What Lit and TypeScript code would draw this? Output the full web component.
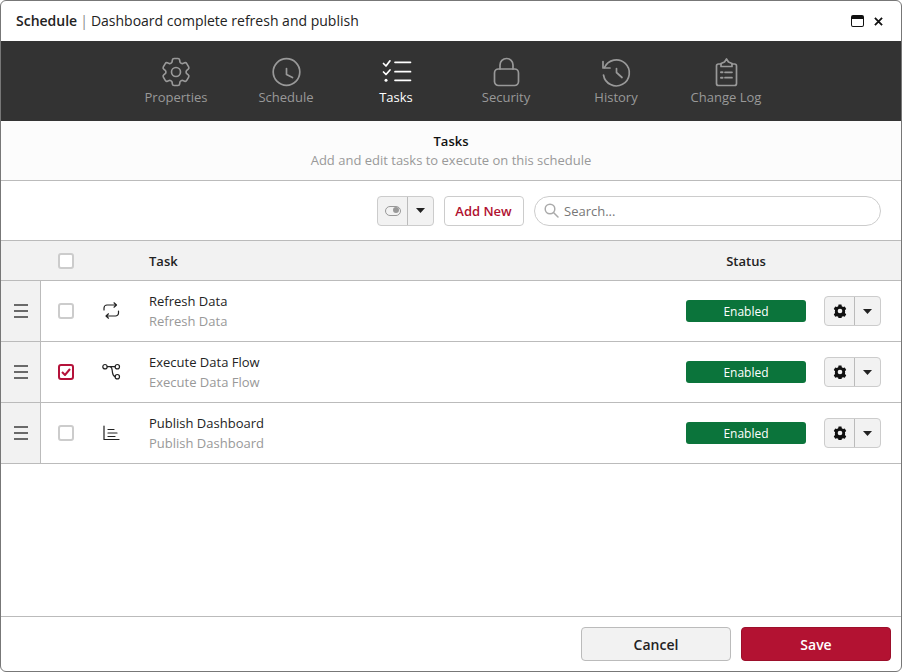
import { LitElement, html, css, svg } from "lit";
import { customElement } from "lit/decorators.js";

const tabs = [
  { label: "Properties", icon: svg`<g transform="translate(14 14) scale(1.500) translate(-12 -12)" stroke-width="1.100"><path d="M9.594 3.940c.090-.542.560-.940 1.110-.940h2.593c.550 0 1.020.398 1.110.940l.213 1.281c.063.374.313.686.645.870.074.040.147.083.220.127.325.196.720.257 1.075.124l1.217-.456a1.125 1.125 0 0 1 1.370.490l1.296 2.247a1.125 1.125 0 0 1-.260 1.431l-1.003.827c-.293.241-.438.613-.430.992a7.723 7.723 0 0 1 0 .255c-.008.378.137.750.430.991l1.004.827c.424.350.534.955.260 1.430l-1.298 2.247a1.125 1.125 0 0 1-1.369.491l-1.217-.456c-.355-.133-.750-.072-1.076.124a6.470 6.470 0 0 1-.220.128c-.331.183-.581.495-.644.869l-.213 1.281c-.090.543-.560.940-1.110.940h-2.594c-.550 0-1.019-.398-1.110-.940l-.213-1.281c-.062-.374-.312-.686-.644-.870a6.520 6.520 0 0 1-.220-.127c-.325-.196-.720-.257-1.076-.124l-1.217.456a1.125 1.125 0 0 1-1.369-.490l-1.297-2.247a1.125 1.125 0 0 1 .260-1.431l1.004-.827c.292-.240.437-.613.430-.991a6.932 6.932 0 0 1 0-.255c.007-.380-.138-.751-.430-.992l-1.004-.827a1.125 1.125 0 0 1-.260-1.430l1.297-2.247a1.125 1.125 0 0 1 1.370-.491l1.216.456c.356.133.751.072 1.076-.124.072-.044.146-.086.220-.128.332-.183.582-.495.644-.869l.214-1.280Z"/><circle cx="12" cy="12" r="3"/></g>` },
  { label: "Schedule", icon: svg`<circle cx="14.500" cy="14" r="13.300"/><path d="M14.500 10.500v6l6 3"/>` },
  { label: "Tasks", icon: svg`<path d="M1.500 5.500 4 8 8 2.800M1.500 14 4 16.500 8 12M13 4.300h15.500M13 13.700h15.500M13 22.300h15.500"/><circle cx="4" cy="22.300" r="1.500" fill="currentColor" stroke="none"/>` },
  { label: "Security", icon: svg`<rect x="2.500" y="11" width="24" height="16.500" rx="4"/><path d="M8 11V7a6.500 6.500 0 0 1 13 0v4"/>` },
  { label: "History", icon: svg`<path d="M2.500 9.500A13 13 0 1 1 1.500 17"/><path d="M1 3.500V10h7M14.500 10.500v4l5.500 5"/>` },
  { label: "Change Log", icon: svg`<path d="M9 6H6.500a2 2 0 0 0-2 2v17.500a2 2 0 0 0 2 2h16a2 2 0 0 0 2-2V8a2 2 0 0 0-2-2H20"/><path d="M9 8.500V5.500L12.500 4 14.500 1 16.500 4 20 5.500V8.500Z"/><path d="M13 14.300h7M13 19.700h7"/><path d="M9 14.300h1.500M9 19.700h1.500" stroke-width="2"/>` },
];

const rowIcons = [
  svg`<path d="M2 8V6a3 3 0 0 1 3-3h9.500M12 .8 14.500 3 12 5.200M16.500 9v2a3 3 0 0 1-3 3H4.500M6.500 11.800 4 14 6.500 16.200"/>`,
  svg`<circle cx="3" cy="3.700" r="2.200"/><circle cx="15.300" cy="3.700" r="2.200"/><circle cx="15.300" cy="13.700" r="2.200"/><path d="M5.200 3.700h7.900M8 3.700c2.500.5 2 3 2.500 6 .3 2 1.500 3.700 2.700 4"/>`,
  svg`<path d="M2 2V15.500H17M6 5.500h6M6 9h9M6 12.500h7"/>`,
];

const rows = [
  { title: "Refresh Data", checked: false },
  { title: "Execute Data Flow", checked: true },
  { title: "Publish Dashboard", checked: false },
];

const caret = html`<svg class="caret" viewBox="0 0 9 5"><path d="M0 0h9L4.500 5z" fill="currentColor"/></svg>`;
const gear = html`<svg class="gear" viewBox="0 0 24 24"><path fill-rule="evenodd" fill="currentColor" d="M9.500 1h5l.6 3 2.200 1.200 2.900-1 2.500 4.300-2.300 2a8 8 0 0 1 0 5l2.300 2-2.500 4.300-2.900-1-2.200 1.200-.6 3h-5l-.6-3-2.200-1.200-2.900 1-2.500-4.300 2.300-2a8 8 0 0 1 0-5l-2.300-2 2.500-4.300 2.900 1L8.900 4zM12 8a4 4 0 1 0 0 8 4 4 0 0 0 0-8z"/></svg>`;

@customElement("app-root")
export class AppRoot extends LitElement {
  static styles = css`
    :host { display: block; width: 902px; height: 672px; font-family: "Open Sans", sans-serif; font-size: 13px; color: #222; background: #fff; }
    * { box-sizing: border-box; }
    .win { width: 902px; height: 672px; border: 1px solid #777; border-radius: 6px; overflow: hidden; display: flex; flex-direction: column; background: #fff; }
    .title { height: 40px; flex: none; display: flex; align-items: center; padding: 0 18px 2px 15px; font-size: 14px; color: #222; }
    .title b { font-weight: 600; }
    .title .sep { color: #888; margin: 0 3px; font-weight: 400; }
    .title .grow { flex: 1; }
    .ctl { display: flex; align-items: center; gap: 10px; margin-top: 2px; }
    .maxi { width: 13px; height: 12px; border: 1.500px solid #111; border-top-width: 4px; border-radius: 2px; }
    .close { width: 9px; height: 9px; display: block; }
    .tabs { height: 80px; flex: none; background: #333; display: flex; justify-content: center; }
    .tab { width: 110px; display: flex; flex-direction: column; align-items: center; padding-top: 17px; color: #999; }
    .tab.on { color: #fff; }
    .tab svg { width: 28px; height: 28px; display: block; fill: none; stroke: currentColor; stroke-width: 1.700; stroke-linecap: round; stroke-linejoin: round; overflow: visible; }
    .tab span { margin-top: 2px; line-height: 18px; font-size: 13px; }
    .head { height: 60px; flex: none; background: #fcfcfc; border-bottom: 1px solid #bbb; display: flex; flex-direction: column; align-items: center; padding-top: 11px; line-height: 19px; }
    .head div { color: #111; font-weight: 600; }
    .head small { font-size: 13px; color: #999; }
    .tools { height: 59px; flex: none; display: flex; align-items: center; justify-content: flex-end; padding: 0 20px 0 0; }
    .split { display: flex; width: 57px; height: 30px; border: 1px solid #ccc; border-radius: 4px; background: #f2f2f2; overflow: hidden; }
    .split > div { display: flex; align-items: center; justify-content: center; }
    .split > div + div { border-left: 1px solid #bbb; }
    .split .a { width: 29px; }
    .split .b { flex: 1; }
    .caret { width: 9px; height: 5px; display: block; color: #222; }
    .tog { width: 16px; height: 10px; border: 1.500px solid #999; border-radius: 5px; }
    .tog i { display: block; width: 6px; height: 6px; border-radius: 50%; background: #999; margin: .5px 0 0 7px; }
    .add { height: 30px; width: 80px; margin-left: 10px; padding-right: 1px; border: 1px solid #ccc; border-radius: 4px; display: flex; align-items: center; justify-content: center; color: #b01030; font-weight: 600; background: #fff; }
    .search { width: 347px; height: 30px; margin-left: 10px; border: 1px solid #ccc; border-radius: 15px; display: flex; align-items: center; padding-left: 9px; color: #777; background: #fff; }
    .search svg { width: 15px; height: 15px; margin-right: 5px; fill: none; stroke: #aaa; stroke-width: 1.500; stroke-linecap: round; }
    .grid { display: grid; grid-template-columns: 40px 50px 58px 1fr 120px 18px 57px 20px; }
    .thead { height: 41px; flex: none; background: #f2f2f2; border-top: 1px solid #bbb; border-bottom: 1px solid #bbb; align-items: center; font-weight: 600; color: #222; }
    .thead .st { text-align: center; }
    .row { height: 61px; flex: none; border-bottom: 1px solid #bbb; align-items: center; }
    .row > .drag { height: 100%; background: #f2f2f2; border-right: 1px solid #bbb; display: flex; flex-direction: column; align-items: center; justify-content: center; gap: 4px; }
    .drag i { display: block; width: 14px; height: 2px; background: #6a6a6a; }
    .cb { width: 16px; height: 16px; border: 2px solid #ccc; border-radius: 3px; margin-left: 17px; background: #fff; display: flex; align-items: center; justify-content: center; }
    .cb.on { border-color: #b5123a; }
    .cb svg { width: 10px; height: 8px; fill: none; stroke: #b5123a; stroke-width: 2; }
    .ricon { width: 18px; height: 18px; margin-left: 11px; display: block; fill: none; stroke: #222; stroke-width: 1.200; stroke-linecap: round; stroke-linejoin: round; overflow: visible; }
    .t1 { color: #222; line-height: 20px; }
    .t2 { color: #999; line-height: 20px; }
    .badge { height: 22px; background: #0b743b; color: #fff; border-radius: 3px; display: flex; align-items: center; justify-content: center; font-size: 12px; }
    .split.act { grid-column: 7; }
    .gear { width: 14px; height: 14px; color: #111; display: block; }
    .fill { flex: 1; }
    .foot { height: 55px; flex: none; border-top: 1px solid #bbb; display: flex; justify-content: flex-end; align-items: center; gap: 10px; padding: 0 10px 0 0; }
    .btn { width: 150px; height: 34px; border-radius: 4px; display: flex; align-items: center; justify-content: center; font-size: 14px; font-weight: 600; }
    .cancel { background: #f2f2f2; border: 1px solid #bbb; color: #222; }
    .save { background: #b31232; border: 1px solid #9c0f2b; color: #fff; }
  `;

  render() {
    return html`<div class="win">
      <div class="title">
        <b>Schedule</b><span class="sep">|</span><span>Dashboard complete refresh and publish</span>
        <span class="grow"></span>
        <div class="ctl">
          <div class="maxi"></div>
          <svg class="close" viewBox="0 0 10 10"><path d="M1 1l8 8M9 1l-8 8" stroke="#111" stroke-width="2"/></svg>
        </div>
      </div>
      <div class="tabs">
        ${tabs.map((t) => html`<div class="tab ${t.label === "Tasks" ? "on" : ""}"><svg viewBox="0 0 28 28">${t.icon}</svg><span>${t.label}</span></div>`)}
      </div>
      <div class="head"><div>Tasks</div><small>Add and edit tasks to execute on this schedule</small></div>
      <div class="tools">
        <div class="split"><div class="a"><div class="tog"><i></i></div></div><div class="b">${caret}</div></div>
        <div class="add">Add New</div>
        <div class="search"><svg viewBox="0 0 15 15"><circle cx="6" cy="6" r="4.800"/><path d="M9.500 9.500l4.500 4.500"/></svg>Search...</div>
      </div>
      <div class="grid thead">
        <div></div><div class="cb"></div><div></div><div>Task</div><div class="st">Status</div>
      </div>
      ${rows.map((r, i) => html`<div class="grid row">
        <div class="drag"><i></i><i></i><i></i></div>
        <div class="cb ${r.checked ? "on" : ""}">${r.checked ? html`<svg viewBox="0 0 10 8"><path d="M1 4l3 3 5-6"/></svg>` : ""}</div>
        <svg class="ricon" viewBox="0 0 18 18">${rowIcons[i]}</svg>
        <div><div class="t1">${r.title}</div><div class="t2">${r.title}</div></div>
        <div class="badge">Enabled</div>
        <div></div>
        <div class="split act"><div class="a">${gear}</div><div class="b">${caret}</div></div>
      </div>`)}
      <div class="fill"></div>
      <div class="foot"><div class="btn cancel">Cancel</div><div class="btn save">Save</div></div>
    </div>`;
  }
}
